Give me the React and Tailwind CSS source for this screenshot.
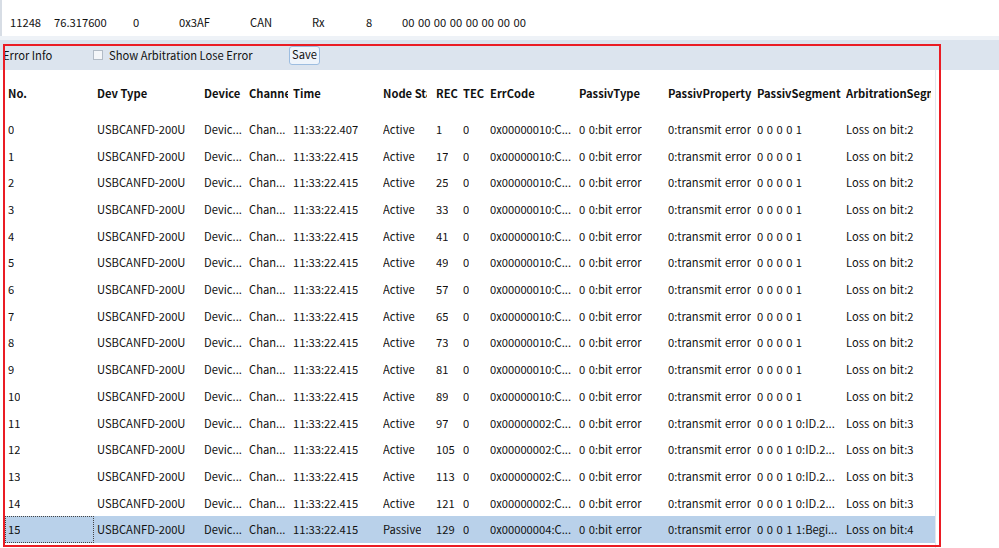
const font = { fontFamily: '"Noto Sans CJK SC", "Liberation Sans", sans-serif' };

const columns = [
  { title: 'No.', w: 'w-[89px]' },
  { title: 'Dev Type', w: 'w-[107px]' },
  { title: 'Device', w: 'w-[45px]' },
  { title: 'Channel', w: 'w-[44px]' },
  { title: 'Time', w: 'w-[90px]' },
  { title: 'Node State', w: 'w-[53px]', pad: 'pr-[6px]' },
  { title: 'REC', w: 'w-[27px]' },
  { title: 'TEC', w: 'w-[27px]' },
  { title: 'ErrCode', w: 'w-[89px]' },
  { title: 'PassivType', w: 'w-[89px]' },
  { title: 'PassivProperty', w: 'w-[89px]' },
  { title: 'PassivSegment', w: 'w-[89px]' },
  { title: 'ArbitrationSegment', w: 'w-[90px]' },
];

function makeRows() {
  const rows = [];
  for (let i = 0; i < 16; i++) {
    let code = '0x00000010:C...';
    let seg = '0 0 0 0 1';
    let arb = 'Loss on bit:2';
    if (i >= 11 && i <= 14) {
      code = '0x00000002:C...';
      seg = '0 0 0 1 0:ID.2...';
      arb = 'Loss on bit:3';
    }
    if (i === 15) {
      code = '0x00000004:C...';
      seg = '0 0 0 1 1:Begi...';
      arb = 'Loss on bit:4';
    }
    rows.push([
      String(i),
      'USBCANFD-200U',
      'Devic...',
      'Chan...',
      i === 0 ? '11:33:22.407' : '11:33:22.415',
      i === 15 ? 'Passive' : 'Active',
      i === 0 ? '1' : String(9 + i * 8),
      '0',
      code,
      '0 0:bit error',
      '0:transmit error',
      seg,
      arb,
    ]);
  }
  return rows;
}

const topCells = [
  { text: '11248', w: 'w-[44px]' },
  { text: '76.317600', w: 'w-[79px]' },
  { text: '0', w: 'w-[46px]' },
  { text: '0x3AF', w: 'w-[71px]' },
  { text: 'CAN', w: 'w-[62px]' },
  { text: 'Rx', w: 'w-[54px]' },
  { text: '8', w: 'w-[36px]' },
  { text: '00 00 00 00 00 00 00 00', w: 'w-[200px]' },
];

export default function App() {
  const rows = makeRows();

  return (
    <div className="relative w-[999px] h-[548px] overflow-hidden bg-white text-[11.2px] text-[#111]" style={font}>
      {/* message row from the list above */}
      <div className="h-[36px] flex items-end pb-[6px] pl-[5px] border-l-2 border-[#d7dde5]">
        {topCells.map((c) => (
          <div key={c.text} className={c.w + ' pl-[3px] whitespace-nowrap leading-4 [word-spacing:1px]'}>
            {c.text}
          </div>
        ))}
      </div>
      <div className="h-[4px] bg-[#eef2f7]" />

      {/* toolbar */}
      <div className="h-[30px] bg-[#dce4ee] flex items-center">
        <span className="pl-[3px] w-[93px] whitespace-nowrap">Error Info</span>
        <span className="w-[10px] h-[10px] border border-[#b2bbc6] bg-[#f4f6f9]" />
        <span className="ml-[6px] w-[180px] whitespace-nowrap">Show Arbitration Lose Error</span>
        <button className="h-[19px] w-[31px] flex items-center justify-center border border-[#9dbde0] rounded-[3px] bg-[#eef4fb] text-[11.2px] leading-none">
          Save
        </button>
      </div>

      {/* error table */}
      <div className="w-[936px] h-[478px] pl-[5px] border-r border-[#e2e7ee]">
        <div className="h-[46px] flex items-center font-bold">
          {columns.map((c) => (
            <div key={c.title} className={c.w + ' pl-[3px] ' + (c.pad || 'pr-[2px]')}>
              <div className="overflow-hidden whitespace-nowrap">{c.title}</div>
            </div>
          ))}
        </div>
        {rows.map((r, i) => (
          <div
            key={i}
            className={'h-[26.7px] flex items-center ' + (i === 15 ? 'bg-[#b9d1ea]' : '')}
          >
            {r.map((cell, j) => (
              <div
                key={j}
                className={
                  columns[j].w +
                  ' h-full flex items-center px-[3px] ' +
                  (i === 15 && j === 0 ? 'border border-dotted border-[#444] pl-[2px]' : '')
                }
              >
                <div className="overflow-hidden whitespace-nowrap [word-spacing:1px]">{cell}</div>
              </div>
            ))}
          </div>
        ))}
      </div>

      {/* red highlight frame drawn over the panel */}
      <div className="absolute left-[3px] top-[44px] w-[938px] h-[503px] border-[2.5px] border-[#ea1c24] pointer-events-none" />
    </div>
  );
}
